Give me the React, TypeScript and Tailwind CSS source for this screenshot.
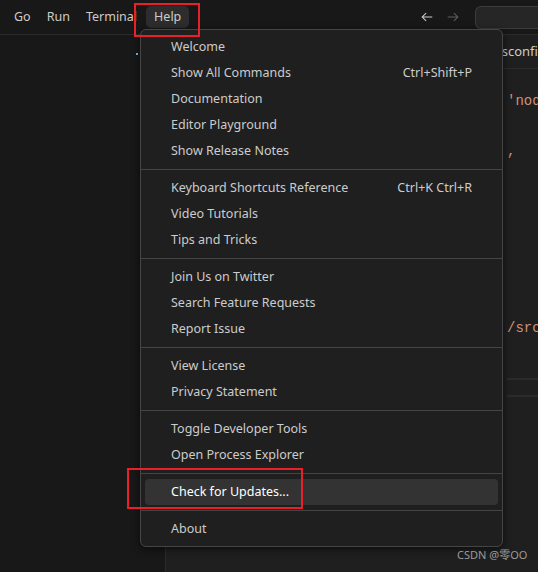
import React from "react";

type Item = { label: string; shortcut?: string; active?: boolean };

const groups: Item[][] = [
  [
    { label: "Welcome" },
    { label: "Show All Commands", shortcut: "Ctrl+Shift+P" },
    { label: "Documentation" },
    { label: "Editor Playground" },
    { label: "Show Release Notes" },
  ],
  [
    { label: "Keyboard Shortcuts Reference", shortcut: "Ctrl+K Ctrl+R" },
    { label: "Video Tutorials" },
    { label: "Tips and Tricks" },
  ],
  [
    { label: "Join Us on Twitter" },
    { label: "Search Feature Requests" },
    { label: "Report Issue" },
  ],
  [{ label: "View License" }, { label: "Privacy Statement" }],
  [{ label: "Toggle Developer Tools" }, { label: "Open Process Explorer" }],
  [{ label: "Check for Updates...", active: true }],
  [{ label: "About" }],
];

function HelpMenu() {
  return (
    <div className="absolute left-[140px] top-[29px] w-[363px] rounded-[6px] border border-[#454545] bg-[#1f1f1f] py-[4px] shadow-[0_2px_8px_rgba(0,0,0,0.6)]">
      {groups.map((g, gi) => (
        <div key={gi}>
          {gi > 0 && <div className="my-[5px] h-px bg-[#454545]"></div>}
          {g.map((item) => (
            <div
              key={item.label}
              className={`mx-[4px] flex h-[26px] items-center justify-between rounded-[4px] pl-[26px] pr-[26px] ${
                item.active ? "bg-[#333333] text-white" : "text-[#cccccc]"
              }`}
            >
              <span>{item.label}</span>
              {item.shortcut && <span>{item.shortcut}</span>}
            </div>
          ))}
        </div>
      ))}
    </div>
  );
}

export default function App() {
  return (
    <div
      className="relative h-[572px] w-[538px] overflow-hidden bg-[#1f1f1f] text-[12.5px] text-[#cccccc]"
      style={{ fontFamily: '"Noto Sans", "Noto Sans CJK SC", sans-serif' }}
    >
      {/* title bar */}
      <div className="flex h-[35px] items-center border-b border-[#2b2b2b] bg-[#181818]">
        <div className="flex items-center pl-[6px]">
          <span className="px-[8px]">Go</span>
          <span className="px-[8px]">Run</span>
          <span className="px-[8px]">Terminal</span>
          <span className="ml-[1px] rounded-[5px] bg-[#2d2d2d] px-[8px] py-[2px]">Help</span>
        </div>
        <div className="ml-auto flex items-center gap-[12px]">
          <svg width="14" height="14" viewBox="0 0 16 16" fill="none" stroke="#cccccc" strokeWidth="1.2">
            <path d="M14 8H2.5M7 3.5L2.5 8 7 12.5" />
          </svg>
          <svg width="14" height="14" viewBox="0 0 16 16" fill="none" stroke="#5f5f5f" strokeWidth="1.2">
            <path d="M2 8h11.5M9 3.5L13.5 8 9 12.5" />
          </svg>
          <div className="ml-[3px] h-[23px] w-[63px] rounded-l-[6px] border border-r-0 border-[#3c3c3c] bg-[#262626]"></div>
        </div>
      </div>

      {/* body */}
      <div className="flex h-[537px]">
        <div className="w-[166px] shrink-0 border-r border-[#2b2b2b] bg-[#181818]">
          <div className="ml-[136px] mt-[18px] h-[2px] w-[2px] bg-[#75beff]"></div>
        </div>
        <div className="flex min-w-0 flex-1 flex-col">
          <div className="flex h-[34px] border-b border-[#2b2b2b] bg-[#181818]">
            <div className="ml-[327px] flex shrink-0 items-center bg-[#1f1f1f] pl-[4px] pr-[10px] text-[13px]">
              tsconfig.json
            </div>
          </div>
          <div
            className="relative flex-1 pl-[341px] text-[14px] text-[#ce9178]"
            style={{ fontFamily: '"Liberation Mono", monospace' }}
          >
            <div className="mt-[23px] h-[19px] leading-[19px]">'node</div>
            <div className="mt-[31px] h-[19px] leading-[19px]">,</div>
            <div className="mt-[158px] h-[19px] leading-[19px]">/src'</div>
            <div className="mt-[40px] h-[2px] bg-[#2b2b2b]"></div>
            <div className="mt-[15px] h-[2px] bg-[#2b2b2b]"></div>
          </div>
        </div>
      </div>

      <HelpMenu />

      {/* annotation boxes */}
      <div className="absolute left-[134px] top-[3px] h-[34px] w-[66px] border-[2px] border-[#e8202a]"></div>
      <div className="absolute left-[127px] top-[468px] h-[41px] w-[176px] border-[2px] border-[#e8202a]"></div>

      <div className="absolute left-[457px] top-[547px] text-[11px] text-[#9a9a9a]">CSDN @零OO</div>
    </div>
  );
}
